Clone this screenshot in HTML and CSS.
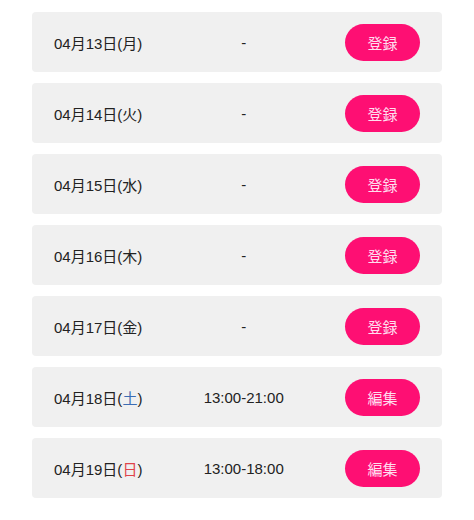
FILE: index.html
```html
<!DOCTYPE html>
<html lang="ja">
<head>
  <meta charset="UTF-8">
  <title>シフト登録</title>
  <link rel="stylesheet" href="styles.css">
</head>
<body>

  <ul class="shift-list">
    <li class="shift-row">
      <span class="shift-date">04月13日(月)</span>
      <span class="shift-time">-</span>
      <button class="shift-btn">登録</button>
    </li>
    <li class="shift-row">
      <span class="shift-date">04月14日(火)</span>
      <span class="shift-time">-</span>
      <button class="shift-btn">登録</button>
    </li>
    <li class="shift-row">
      <span class="shift-date">04月15日(水)</span>
      <span class="shift-time">-</span>
      <button class="shift-btn">登録</button>
    </li>
    <li class="shift-row">
      <span class="shift-date">04月16日(木)</span>
      <span class="shift-time">-</span>
      <button class="shift-btn">登録</button>
    </li>
    <li class="shift-row">
      <span class="shift-date">04月17日(金)</span>
      <span class="shift-time">-</span>
      <button class="shift-btn">登録</button>
    </li>
    <li class="shift-row">
      <span class="shift-date">04月18日(<span class="sat">土</span>)</span>
      <span class="shift-time">13:00-21:00</span>
      <button class="shift-btn">編集</button>
    </li>
    <li class="shift-row">
      <span class="shift-date">04月19日(<span class="sun">日</span>)</span>
      <span class="shift-time">13:00-18:00</span>
      <button class="shift-btn">編集</button>
    </li>
  </ul>

</body>
</html>
```

FILE: styles.css
```css
body {
  margin: 0;
  background: #fff;
  color: #222;
  font-family: "Liberation Sans", "Noto Sans CJK JP", sans-serif;
}

.shift-list {
  list-style: none;
  margin: 0;
  padding: 12px 0 0 32px;
  width: 410px;
  display: flex;
  flex-direction: column;
  gap: 11px;
}

.shift-row {
  height: 60px;
  box-sizing: border-box;
  padding: 0 22px;
  background: #f0f0f0;
  border-radius: 4px;
  display: flex;
  align-items: center;
  font-size: 15px;
}

.shift-time {
  flex: 1;
  text-align: center;
}

.shift-btn {
  width: 75px;
  height: 37px;
  border: none;
  border-radius: 19px;
  background: #fe0f73;
  color: #fde;
  font-family: inherit;
  font-size: 15px;
  cursor: pointer;
}

.sat {
  color: #3b6cb4;
}

.sun {
  color: #e0434b;
}
```
